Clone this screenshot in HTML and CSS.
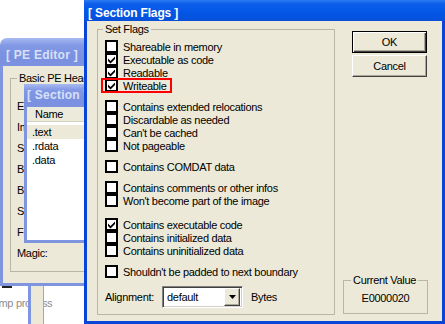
FILE: index.html
```html
<!DOCTYPE html>
<html lang="en">
<head>
  <meta charset="UTF-8" />
  <title>Section Flags</title>
  <link rel="stylesheet" href="styles.css">
</head>
<body>
  <div class="desk">
    <div class="back-mark"></div>
    <div class="back-text">Dump process</div>
    <div class="strip"></div>

    <div class="win pe">
      <div class="title inactive">[ PE Editor ]</div>
      <div class="body">
        <fieldset class="group basic">
          <legend>Basic PE Header Info</legend>
          <div class="labels">
            <span>EntryPoint:</span>
            <span>ImageBase:</span>
            <span>SizeOfImage:</span>
            <span>BaseOfCode:</span>
            <span>BaseOfData:</span>
            <span>SectionAlignment:</span>
            <span>FileAlignment:</span>
          </div>
          <div class="magic">Magic:</div>
        </fieldset>

        <div class="win sect">
          <div class="title inactive">[ Section Table ]</div>
          <div class="body">
            <div class="list">
              <div class="lhead">Name</div>
              <div class="lrow sel">.text</div>
              <div class="lrow">.rdata</div>
              <div class="lrow">.data</div>
            </div>
          </div>
        </div>
      </div>
    </div>

    <div class="win flags">
      <div class="title">[ Section Flags ]</div>
      <div class="body">
        <fieldset class="group setflags">
          <legend>Set Flags</legend>
          <div class="grp">
            <div class="row"><span class="cb"></span>Shareable in memory</div>
            <div class="row"><span class="cb"><svg viewBox="0 0 9 9"><path d="M1 3.5 3.5 6 8 1.5V4L3.5 8.5 1 6z"/></svg></span>Executable as code</div>
            <div class="row"><span class="cb"><svg viewBox="0 0 9 9"><path d="M1 3.5 3.5 6 8 1.5V4L3.5 8.5 1 6z"/></svg></span>Readable</div>
            <div class="row hl"><span class="cb"><svg viewBox="0 0 9 9"><path d="M1 3.5 3.5 6 8 1.5V4L3.5 8.5 1 6z"/></svg></span>Writeable<span class="mark"></span></div>
          </div>
          <div class="grp">
            <div class="row"><span class="cb"></span>Contains extended relocations</div>
            <div class="row"><span class="cb"></span>Discardable as needed</div>
            <div class="row"><span class="cb"></span>Can't be cached</div>
            <div class="row"><span class="cb"></span>Not pageable</div>
          </div>
          <div class="grp">
            <div class="row"><span class="cb"></span>Contains COMDAT data</div>
          </div>
          <div class="grp">
            <div class="row"><span class="cb"></span>Contains comments or other infos</div>
            <div class="row"><span class="cb"></span>Won't become part of the image</div>
          </div>
          <div class="grp wide">
            <div class="row"><span class="cb"><svg viewBox="0 0 9 9"><path d="M1 3.5 3.5 6 8 1.5V4L3.5 8.5 1 6z"/></svg></span>Contains executable code</div>
            <div class="row"><span class="cb"></span>Contains initialized data</div>
            <div class="row"><span class="cb"></span>Contains uninitialized data</div>
          </div>
          <div class="grp">
            <div class="row"><span class="cb"></span>Shouldn't be padded to next boundary</div>
          </div>
          <div class="grp align-row">
            <span class="align-lbl">Alignment:</span>
            <div class="combo">
              <span class="combo-val">default</span>
              <span class="drop"><svg viewBox="0 0 7 4"><path d="M0 0h7L3.5 4z"/></svg></span>
            </div>
            <span>Bytes</span>
          </div>
        </fieldset>

        <div class="side">
          <button class="btn def">OK</button>
          <button class="btn">Cancel</button>
          <fieldset class="group cur">
            <legend>Current Value</legend>
            <div class="val">E0000020</div>
          </fieldset>
        </div>
      </div>
    </div>
  </div>
</body>
</html>
```

FILE: styles.css
```css
* { box-sizing: border-box; }
body {
  margin: 0; background: #fff;
  font-family: "Liberation Sans", Arial, sans-serif;
  font-size: 11px; letter-spacing: -0.3px; color: #000;
}
.desk { position: relative; width: 445px; height: 324px; overflow: hidden; }

/* things behind the windows */
.back-mark { position: absolute; left: 2px; top: 286px; width: 10px; height: 2px; background: #222; }
.back-text { position: absolute; left: -15px; top: 297px; line-height: 13px; color: #8c8c8c; white-space: nowrap; }
.strip {
  position: absolute; left: 28px; top: 286px; width: 16px; height: 40px;
  background: #ece9d8; border-left: 3px solid #7f95e0; border-right: 1px solid #aca899;
}

/* windows */
.win { position: absolute; display: flex; flex-direction: column; }
.title {
  color: #fff; font-weight: bold; font-size: 12px; line-height: 16px;
  white-space: nowrap; overflow: hidden;
  background: linear-gradient(180deg, #2b7cf3 0%, #0d5fea 18%, #0456e6 55%, #0453df 85%, #0a4ed6 100%);
}
.title.inactive {
  color: #d8e0f7;
  background: linear-gradient(180deg, #a8baf0 0%, #8399e6 25%, #7a90e0 70%, #7d92e0 100%);
}
.body { flex: 1; background: #ece9d8; position: relative; }

.pe { left: 0; top: 38px; width: 130px; height: 248px; }
.pe > .title { height: 28px; padding: 9px 0 0 6px; letter-spacing: 0.25px; border-radius: 7px 0 0 0; }
.pe > .body { border-left: 3px solid #7f95e0; border-bottom: 3px solid #7f95e0; }

.sect { left: 21px; top: 18px; width: 100px; height: 159px; }
.sect > .title { height: 23px; padding: 3px 0 0 3px; letter-spacing: 0.25px; }
.sect > .body { border-left: 3px solid #7f95e0; border-bottom: 3px solid #7f95e0; display: flex; }

.list { flex: 1; background: #fff; }
.lhead {
  height: 15px; line-height: 15px; padding-left: 8px; margin-bottom: 3px;
  background: #ebeadb; border-bottom: 1px solid #d6d2c2;
}
.lrow { height: 14px; line-height: 14px; padding-left: 5px; }
.lrow.sel { background: #ece9d8; }

/* group boxes */
.group {
  margin: 0; min-width: 0;
  border: 1px solid #b9b6a6;
}
.group legend { padding: 0 2px; line-height: 13px; }

.basic { margin: 6px 0 0 7px; width: 150px; height: 200px; padding: 15px 0 0 6px; }
.labels {
  display: flex; flex-direction: column; gap: 8px; line-height: 13px;
  white-space: nowrap; width: 7px; overflow: hidden;
}
.magic { margin-top: 8px; line-height: 13px; }

.flags { left: 84px; top: 0; width: 361px; height: 324px; }
.flags > .title { height: 21px; padding: 5px 0 0 4px; letter-spacing: -0.15px; }
.flags > .body {
  display: flex; padding: 2px 0 6px 10px;
  border: 3px solid #0b45d8; border-top: 0;
}

.setflags { width: 238px; padding: 4px 0 0 7px; }
.setflags legend { margin-left: -2px; }
.grp + .grp { margin-top: 8px; }
.grp.wide { margin-top: 11px; }
.row { position: relative; display: flex; align-items: center; gap: 5px; height: 13px; width: fit-content; white-space: nowrap; }
.cb {
  width: 13px; height: 13px; flex: none;
  border: 2px solid #000; background: #fff;
  display: flex;
}
.cb svg { width: 9px; height: 9px; }
.mark {
  position: absolute; left: -4px; right: -5px; top: -1px; bottom: -1px;
  border: 2px solid #f00;
}

.align-row { display: flex; align-items: center; height: 22px; }
.align-lbl { width: 57px; }
.combo {
  width: 81px; height: 22px; margin-right: 8px;
  display: flex; align-items: center; background: #fff;
  border: 1px solid; border-color: #808080 #fff #fff #808080;
  box-shadow: inset 1px 1px #404040, inset -1px -1px #d4d0c8;
  padding: 2px 2px 2px 4px;
}
.combo-val { flex: 1; }
.drop {
  width: 16px; height: 18px; display: flex; align-items: center; justify-content: center;
  background: #ece9d8;
  border: 1px solid; border-color: #fff #404040 #404040 #fff;
  box-shadow: inset -1px -1px #aca899;
}
.drop svg { width: 7px; height: 4px; }

.side { width: 85px; margin-left: 8px; display: flex; flex-direction: column; }
.btn {
  font: inherit; letter-spacing: inherit; color: #000;
  width: 75px; height: 22px; margin-left: 9px; padding: 0;
  background: #ece9d8;
  border: 1px solid; border-color: #fff #404040 #404040 #fff;
  box-shadow: inset -1px -1px #aca899;
}
.btn.def {
  margin-top: 8px; border: 1px solid #000;
  box-shadow: inset 1px 1px #fff, inset -1px -1px #404040, inset -2px -2px #aca899;
}
.btn + .btn { margin-top: 2px; }
.cur { margin-top: auto; margin-bottom: 1px; height: 40px; padding: 0; }
.cur legend { margin-left: 7px; }
.val { text-align: center; line-height: 13px; margin-top: 5px; }
```
